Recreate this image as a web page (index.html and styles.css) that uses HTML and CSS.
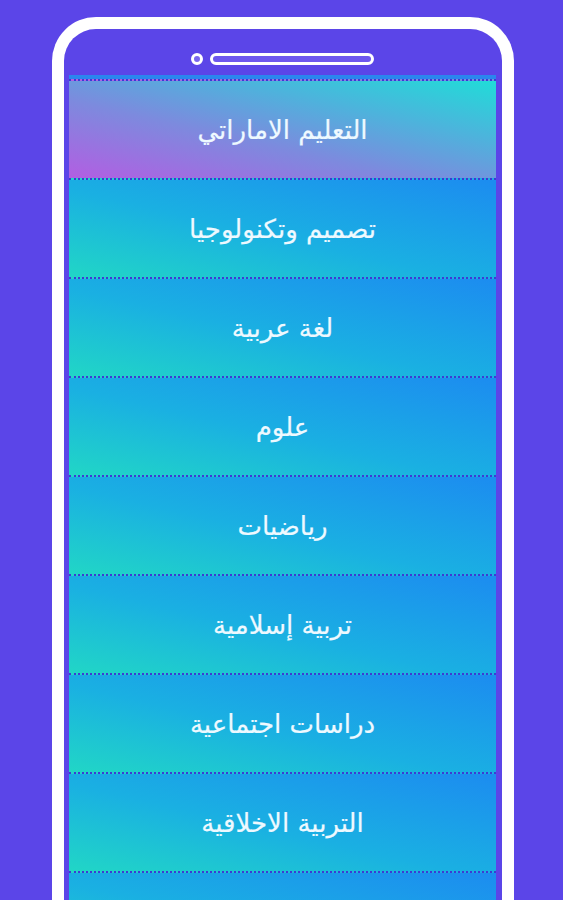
FILE: index.html
```html
<!DOCTYPE html>
<html lang="ar">
<head>
    <meta charset="UTF-8">
    <meta name="viewport" content="width=device-width, initial-scale=1.0">
    <title>التعليم الاماراتي</title>
    <link rel="stylesheet" href="styles.css">
</head>
<body>
    <div class="phone">
        <!-- الجزء العلوي: السماعة والكاميرا -->
        <div class="phone-top">
            <span class="camera"></span>
            <span class="speaker"></span>
        </div>

        <!-- قائمة المواد -->
        <ul class="subjects">
            <li class="subject header">التعليم الاماراتي</li>
            <li class="subject">تصميم وتكنولوجيا</li>
            <li class="subject">لغة عربية</li>
            <li class="subject">علوم</li>
            <li class="subject">رياضيات</li>
            <li class="subject">تربية إسلامية</li>
            <li class="subject">دراسات اجتماعية</li>
            <li class="subject">التربية الاخلاقية</li>
            <li class="subject"></li>
        </ul>
    </div>
</body>
</html>
```

FILE: styles.css
```css
/* الخلفية العامة */
body {
    margin: 0;
    padding: 0;
    background-color: #5b45e8;
    font-family: "DejaVu Sans", sans-serif;
    height: 900px;
    overflow: hidden;
}

/* إطار الهاتف */
.phone {
    box-sizing: border-box;
    margin: 17px 0 0 52px;
    width: 462px;
    height: 1000px;
    border: 12px solid #ffffff;
    border-bottom: none;
    border-radius: 44px 44px 0 0;
    padding: 0 6px 0 5px;
}

.phone-top {
    height: 46px;
    display: flex;
    align-items: center;
    gap: 7px;
    padding: 14px 0 0 122px;
    box-sizing: border-box;
}

.camera {
    width: 6px;
    height: 6px;
    border: 3px solid #ffffff;
    border-radius: 50%;
    background-color: #7a66ee;
}

.speaker {
    width: 158px;
    height: 6px;
    border: 3px solid #ffffff;
    border-radius: 6px;
    background-color: #6d57ee;
}

/* القائمة */
.subjects {
    list-style: none;
    margin: 0;
    padding: 0;
    border-top: 4px solid #2a86ee;
}

.subject {
    height: 97px;
    border-top: 2px dotted #3d3ad4;
    display: flex;
    justify-content: center;
    align-items: center;
    color: #eef9ff;
    font-size: 26px;
    -webkit-text-stroke: 0.2px #eef9ff;
    direction: rtl;
    background: linear-gradient(to top right, #21d6c6 0%, #1ab0e2 45%, #1c8cf0 100%);
}

.subject.header {
    background: linear-gradient(to top right, #b25ee2 0%, #7d8ade 40%, #4cb4dc 70%, #20dcd8 100%);
}
```
